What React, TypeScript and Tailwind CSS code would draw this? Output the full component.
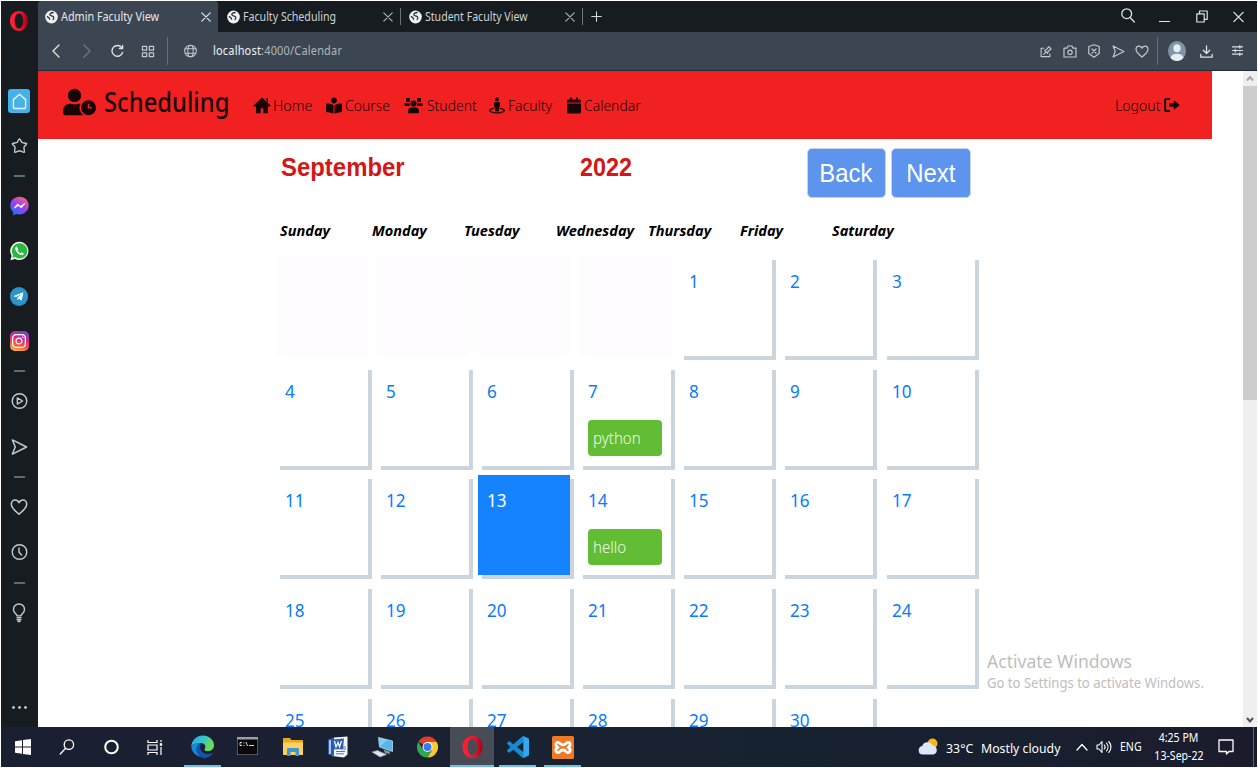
import React from "react";
import {
  FaUserClock,
  FaBookReader,
  FaStreetView,
  FaCalendar,
  FaFacebookMessenger,
  FaTelegramPlane,
  FaInstagram,
} from "react-icons/fa";

const line = {
  fill: "none",
  stroke: "currentColor",
  strokeLinecap: "round" as const,
  strokeLinejoin: "round" as const,
};

function Label({ w, className, children }: { w: string; className: string; children: React.ReactNode }) {
  return (
    <span className={`block shrink-0 ${w}`}>
      <span className={`block w-max origin-left whitespace-nowrap ${className}`}>{children}</span>
    </span>
  );
}

function OperaLogo({ className }: { className: string }) {
  return (
    <svg viewBox="0 0 20 22" className={className}>
      <defs>
        <linearGradient id="opera" x1="0" y1="0" x2="1" y2="0">
          <stop offset="0" stopColor="#ff2138" />
          <stop offset=".6" stopColor="#f0142b" />
          <stop offset="1" stopColor="#a3000f" />
        </linearGradient>
      </defs>
      <path
        fillRule="evenodd"
        fill="url(#opera)"
        d="M10 0C4.200 0 0 4.800 0 11s4.200 11 10 11 10-4.800 10-11S15.800 0 10 0zm0 2.600c3 0 4.700 3.900 4.700 8.400s-1.700 8.400-4.700 8.400-4.700-3.900-4.700-8.400S7 2.600 10 2.600z"
      />
    </svg>
  );
}

function SiteGlobe() {
  return (
    <svg viewBox="0 0 14 14" className="h-[14px] w-[13px] shrink-0">
      <ellipse cx="7" cy="7" rx="6.800" ry="6.900" fill="#f1f3f5" />
      <path
        d="M9.300 2.200C7 2 5 3.200 5.200 4.600c.2 1.300 2 .9 3.300 1.700 1.400.9 1.300 2.500-.3 3.600M2 6.300l2.200 1.500 1 2"
        fill="none"
        stroke="#2a333c"
        strokeWidth="1.400"
      />
    </svg>
  );
}

function Close({ className }: { className: string }) {
  return (
    <svg viewBox="0 0 10 10" className={className} {...line} strokeWidth="1.200">
      <path d="M.8.8 9.200 9.200M9.200.8.8 9.200" />
    </svg>
  );
}

function Heart({ className }: { className: string }) {
  return (
    <svg viewBox="0 0 18 18" className={className} {...line} strokeWidth="1.600">
      <path d="M9 16.200C5 13 1.300 9.800 1.300 6.200 1.300 3.800 3 2 5.100 2 6.800 2 8.200 3 9 4.700 9.800 3 11.200 2 12.900 2c2.100 0 3.800 1.800 3.800 4.200 0 3.600-3.700 6.800-7.700 10z" />
    </svg>
  );
}

function SendArrow({ className }: { className: string }) {
  return (
    <svg viewBox="0 0 18 18" className={className} {...line} strokeWidth="1.600">
      <path d="M1.500 1.500 16.500 9l-15 7.500L4.500 9z" />
    </svg>
  );
}

const Dash = ({ mt }: { mt: string }) => <div className={`h-[2px] w-[11px] shrink-0 bg-[#5f6a72] ${mt}`} />;

const Slot = ({ mt, children }: { mt: string; children: React.ReactNode }) => (
  <div className={`flex h-[18px] w-full shrink-0 items-center justify-center text-[#c5cacd] ${mt}`}>{children}</div>
);

function Sidebar() {
  return (
    <aside className="flex w-[37px] shrink-0 flex-col items-center bg-[#171c20] pr-px">
      <OperaLogo className="mt-[10px] h-[20px] w-[18px] shrink-0" />
      <div className="mt-[58px] flex h-[24px] w-[22px] shrink-0 items-center justify-center rounded-[3px] bg-[#45b1e8] text-[#e3f6ff]">
        <svg viewBox="0 0 16 18" className="h-[17px] w-[15px]" {...line} strokeWidth="1.500">
          <path d="M1.500 7 8 1.200 14.500 7v7.500c0 1.200-.8 2-2 2h-9c-1.200 0-2-.8-2-2z" />
        </svg>
      </div>
      <Slot mt="mt-[24px]">
        <svg viewBox="0 0 18 18" className="h-[18px] w-[17px]" {...line} strokeWidth="1.500">
          <path d="M9 1.300c.7 0 2 3.600 2.600 4 .6.500 4.900.5 5.100 1.200.2.700-2.800 3-3 3.800-.2.700.9 4.900.3 5.400-.6.400-4.200-1.700-5-1.700s-4.400 2.100-5 1.700c-.6-.5.500-4.700.3-5.400-.2-.8-3.200-3.100-3-3.800.2-.7 4.500-.7 5.100-1.200.6-.4 1.900-4 2.600-4z" />
        </svg>
      </Slot>
      <Dash mt="mt-[20px]" />
      <Slot mt="mt-[20px]">
        <svg viewBox="0 0 20 20" className="h-[20px] w-[19px] shrink-0">
          <defs>
            <linearGradient id="msg" x1=".2" y1="1" x2=".8" y2="0">
              <stop offset="0" stopColor="#0a7cff" />
              <stop offset=".5" stopColor="#9a3cf6" />
              <stop offset="1" stopColor="#ff6a6a" />
            </linearGradient>
          </defs>
          <path d="M10 .3C4.500.3.3 4.300.3 9.600c0 2.900 1.200 5.300 3.100 7V20l3-1.600c1.100.3 2.300.5 3.600.5 5.500 0 9.700-4 9.700-9.300S15.500.3 10 .3z" fill="url(#msg)" />
          <path d="M4.300 12.200 8 7.800l3 2.400 4.700-2.900L12 12l-3-2.400z" fill="#fff" stroke="#fff" strokeWidth=".8" />
        </svg>
      </Slot>
      <Slot mt="mt-[27px]">
        <svg viewBox="0 0 20 20" className="h-[20px] w-[19px] shrink-0">
          <path d="M10 .2A9.700 9.700 0 0 0 1.700 15L.4 19.700 5.200 18.500A9.700 9.700 0 1 0 10 .2z" fill="#f2f5f3" />
          <path d="M10 1.900A8 8 0 0 0 3.300 14.300l-.7 2.800 2.900-.7A8 8 0 1 0 10 1.900z" fill="#2bb742" />
          <path d="M7 5.300c-.8.200-1.500 1-1.400 2.200.2 2.800 3.600 6.400 6.600 6.800 1.200.1 2.200-.7 2.300-1.800l-2.400-1.300-1.100 1.200c-1.500-.7-2.500-1.700-3.100-3.100l.9-1.100z" fill="#fff" />
        </svg>
      </Slot>
      <Slot mt="mt-[27px]">
        <div className="flex h-[19px] w-[18px] shrink-0 items-center justify-center rounded-full bg-[#2b95c9]">
          <FaTelegramPlane className="mr-px size-[11px] text-white" />
        </div>
      </Slot>
      <Slot mt="mt-[27px]">
        <div className="flex h-[20px] w-[19px] shrink-0 items-center justify-center rounded-[5px] bg-[linear-gradient(20deg,#fdb845_5%,#f5553d_35%,#d6298c_60%,#5a4bd8_100%)]">
          <FaInstagram className="size-[16px] text-white" />
        </div>
      </Slot>
      <Dash mt="mt-[20px]" />
      <Slot mt="mt-[20px]">
        <svg viewBox="0 0 18 18" className="h-[18px] w-[17px]" {...line} strokeWidth="1.500">
          <circle cx="9" cy="9" r="7.700" />
          <path d="M6.700 5.700v6.600L12.300 9z" />
        </svg>
      </Slot>
      <Slot mt="mt-[28px]">
        <SendArrow className="h-[18px] w-[17px]" />
      </Slot>
      <Dash mt="mt-[20px]" />
      <Slot mt="mt-[20px]">
        <Heart className="h-[18px] w-[18px]" />
      </Slot>
      <Slot mt="mt-[27px]">
        <svg viewBox="0 0 18 18" className="h-[18px] w-[17px]" {...line} strokeWidth="1.500">
          <circle cx="9" cy="9" r="7.700" />
          <path d="M8.500 4.700V9.200l2.700 2.900" />
        </svg>
      </Slot>
      <Dash mt="mt-[21px]" />
      <Slot mt="mt-[20px]">
        <svg viewBox="0 0 14 21" className="h-[20px] w-[14px] shrink-0" {...line} strokeWidth="1.500">
          <path d="M5 13.500C4.600 11.500 1.200 10.500 1.200 6.800a5.800 5.800 0 0 1 11.600 0c0 3.700-3.400 4.700-3.800 6.700zM5 15.500h4M5 17.500h4M6 19.500h2" />
        </svg>
      </Slot>
      <Slot mt="mt-[76px]">
        <svg viewBox="0 0 15 3" className="h-[3px] w-[15px]" fill="currentColor">
          <circle cx="1.500" cy="1.500" r="1.400" />
          <circle cx="7.500" cy="1.500" r="1.400" />
          <circle cx="13.500" cy="1.500" r="1.400" />
        </svg>
      </Slot>
    </aside>
  );
}

function Tab({ title, active, divider, scale }: { title: string; active?: boolean; divider?: boolean; scale: string }) {
  return (
    <div
      className={`flex h-full shrink-0 items-center ${
        active ? "w-[180px] rounded-t-[3px] bg-[#3b4652] pl-[7px] text-[#e4e8eb]" : "w-[182px] pl-[9px] text-[#cdd2d6]"
      }`}
    >
      <SiteGlobe />
      <Label w="ml-[3px] w-[140px]" className={`text-[12px] leading-4 ${scale}`}>
        {title}
      </Label>
      <Close className={`size-[10px] shrink-0 ${active ? "text-[#e4e8eb]" : "text-[#aab1b6]"}`} />
      {divider && <span className="ml-[7px] h-[17px] w-px shrink-0 bg-[#6b747b]" />}
    </div>
  );
}

function TabBar() {
  return (
    <div className="flex h-[31px] shrink-0 items-center bg-[#171c20]">
      <Tab title="Admin Faculty View" active scale="scale-x-[.9]" />
      <Tab title="Faculty Scheduling" divider scale="scale-x-[.885]" />
      <Tab title="Student Faculty View" divider scale="scale-x-[.88]" />
      <svg viewBox="0 0 12 12" className="ml-[9px] size-[11px] text-[#d5dadd]" {...line} strokeWidth="1.200">
        <path d="M6 .8v10.400M.8 6h10.400" />
      </svg>
      <div className="ml-auto flex items-center pr-[13px] text-[#dfe3e5]">
        <svg viewBox="0 0 14 15" className="mb-[3px] h-[15px] w-[14px]" {...line} strokeWidth="1.300">
          <circle cx="5.700" cy="5.700" r="4.900" />
          <path d="M9.300 9.700l4 4.300" />
        </svg>
        <span className="ml-[24px] mt-[9px] h-px w-[11px] bg-[#dfe3e5]" />
        <svg viewBox="0 0 12 13" className="ml-[26px] h-[13px] w-[12px]" {...line} strokeWidth="1.200">
          <path d="M.8 3.800h7.400v8.200H.8zM3.500 3.500V1h7.700v8.300H8.500" />
        </svg>
        <Close className="ml-[25px] h-[12px] w-[11px]" />
      </div>
    </div>
  );
}

function AddressBar() {
  return (
    <div className="flex h-[39px] shrink-0 items-center border-b border-[#232c34] bg-[#3b4652] text-[#c3c9ce]">
      <svg viewBox="0 0 8 14" className="ml-[14px] h-[14px] w-[8px] text-[#dde1e4]" {...line} strokeWidth="1.400">
        <path d="M7 1 1 7l6 6" />
      </svg>
      <svg viewBox="0 0 8 14" className="ml-[23px] h-[14px] w-[8px] text-[#6d7780]" {...line} strokeWidth="1.400">
        <path d="M1 1l6 6-6 6" />
      </svg>
      <svg viewBox="0 0 14 14" className="ml-[20px] h-[14px] w-[13px] text-[#dde1e4]" {...line} strokeWidth="1.500">
        <path d="M12.500 8.500A5.800 5.800 0 1 1 11.500 3.300M12.500 1v3.300H9" />
      </svg>
      <svg viewBox="0 0 14 14" className="ml-[17px] h-[13px] w-[14px]" {...line} strokeWidth="1.300">
        <path d="M1 1.500h4.600v4H1zM8.400 1.500H13v4H8.400zM1 8.500h4.600v4H1zM8.400 8.500H13v4H8.400z" />
      </svg>
      <span className="ml-[12px] h-[28px] w-px bg-[#65707a]" />
      <svg viewBox="0 0 14 14" className="ml-[16px] h-[14px] w-[13px]" {...line} strokeWidth="1.100">
        <circle cx="7" cy="7" r="6.300" />
        <ellipse cx="7" cy="7" rx="2.900" ry="6.300" />
        <path d="M1.300 4.600h11.400M1.300 9.400h11.400" />
      </svg>
      <Label w="ml-[16px] w-[140px]" className="scale-x-[.915] text-[12px] leading-4 tracking-[.2px] text-[#aeb6bd]">
        <span className="text-[#f0f2f4]">localhost</span>:4000/Calendar
      </Label>
      <div className="ml-auto flex items-center pr-[14px]">
        <svg viewBox="0 0 13 13" className="h-[13px] w-[12px]" {...line} strokeWidth="1.200">
          <path d="M4 3H1.200v9h9.500V9M4 9.500l2.300-2.300M5 5.200l3.200 3.300.5-2L12 3.800 9.500 1.200 7 4.500z" />
        </svg>
        <svg viewBox="0 0 14 13" className="ml-[11px] h-[13px] w-[14px]" {...line} strokeWidth="1.200">
          <path d="M1 3.200h3L5 1h4l1 2.200h3V12H1z" />
          <circle cx="7" cy="7.300" r="2.200" />
        </svg>
        <svg viewBox="0 0 12 14" className="ml-[11px] h-[14px] w-[12px]" {...line} strokeWidth="1.200">
          <path d="M6 .8 11.200 2.500v7L6 13.200.8 9.500v-7zM4 5l4 4M8 5 4 9" />
        </svg>
        <SendArrow className="ml-[12px] h-[13px] w-[13px]" />
        <Heart className="ml-[10px] h-[15px] w-[14px]" />
        <span className="ml-[8px] h-[28px] w-px bg-[#65707a]" />
        <svg viewBox="0 0 18 20" className="ml-[10px] h-[20px] w-[18px]">
          <ellipse cx="9" cy="10" rx="9" ry="10" fill="#8295a5" />
          <ellipse cx="9" cy="7.300" rx="3.600" ry="4" fill="#e7eef3" />
          <path d="M2.500 16.700c1-3.100 3.600-4 6.500-4s5.500.9 6.500 4C13.800 18.900 11.500 20 9 20s-4.800-1.100-6.500-3.300z" fill="#e7eef3" />
        </svg>
        <svg viewBox="0 0 13 13" className="ml-[14px] h-[13px] w-[13px] text-[#dde1e4]" {...line} strokeWidth="1.300">
          <path d="M6.500.8v7.500M3.300 5.300l3.200 3.200 3.200-3.200M.8 9.500v2.700h11.400V9.500" />
        </svg>
        <svg viewBox="0 0 12 12" className="ml-[19px] mb-px h-[11px] w-[11px] text-[#dde1e4]" {...line} strokeWidth="1.200">
          <path d="M.5 2h11M.5 6h11M.5 10h11M8.500.5v3M3.500 4.500v3M8.500 8.500v3" />
        </svg>
      </div>
    </div>
  );
}

const navText = "text-[15px] leading-5 font-light";

function Navbar() {
  return (
    <nav className="flex h-[68px] w-[1174px] shrink-0 items-center bg-[#f22121] pl-[25px] text-[#1a0505]">
      <FaUserClock className="mb-[7px] h-[28px] w-[33px] shrink-0" />
      <Label w="ml-[8px] mb-[6px] w-[149px]" className="scale-x-[.88] text-[27px] font-medium leading-8">
        Scheduling
      </Label>
      <svg viewBox="0 0 18 17" className="h-[17px] w-[18px] shrink-0" fill="currentColor">
        <path d="M9 .5 17.800 8.800 16.500 9.500H15V16.200h-4.700v-5H7.700v5H3V9.500H.8L.2 8.800z" />
        <path d="M12.500 1.300H15V6z" />
      </svg>
      <Label w="ml-[2px] w-[53px]" className={`${navText} scale-x-[.95]`}>Home</Label>
      <FaBookReader className="h-[17px] w-[16px] shrink-0" />
      <Label w="ml-[3px] w-[59px]" className={`${navText} scale-x-[.93]`}>Course</Label>
      <svg viewBox="0 0 19 17" className="h-[17px] w-[19px] shrink-0" fill="currentColor">
        <path d="M2 1h3.800v4H2zM13.200 1H17v4h-3.800zM.5 6.200h4.800L6 9H.5zM13.700 6.200h4.800V9H13z" />
        <circle cx="9.500" cy="6.500" r="3.100" />
        <path d="M4 16.300v-2.500c0-2 1.300-3.300 3.300-3.300h4.400c2 0 3.300 1.300 3.300 3.300v2.500z" />
      </svg>
      <Label w="ml-[4px] w-[62px]" className={`${navText} scale-x-[.93]`}>Student</Label>
      <FaStreetView className="h-[17px] w-[16px] shrink-0" />
      <Label w="ml-[3px] w-[59px]" className={`${navText} scale-x-[.93]`}>Faculty</Label>
      <FaCalendar className="h-[17px] w-[14px] shrink-0" />
      <Label w="ml-[3px] w-[60px]" className={`${navText} scale-x-[.93]`}>Calendar</Label>
      <div className="ml-auto flex items-center pr-[32px]">
        <Label w="w-[49px]" className={`${navText} scale-x-[.94]`}>Logout</Label>
        <svg viewBox="0 0 16 14" className="mb-px h-[14px] w-[16px] shrink-0">
          <path d="M6 1H2.200C1.500 1 1.100 1.400 1.100 2v10c0 .6.400 1 1.100 1H6" fill="none" stroke="currentColor" strokeWidth="2" />
          <path d="M5.500 5.200H9.800V2.200L15.800 7l-6 4.800v-3H5.500z" fill="currentColor" />
        </svg>
      </div>
    </nav>
  );
}

const weekdays = ["Sunday", "Monday", "Tuesday", "Wednesday", "Thursday", "Friday", "Saturday"];
const events: Record<number, string> = { 7: "python", 14: "hello" };
const today = 13;
const cells: number[] = Array.from({ length: 34 }, (_, i) => i - 3);

function DayCell({ day }: { day: number }) {
  if (day < 1) return <div className="h-[100px] w-[92px] bg-[#fefcff]" />;
  const isToday = day === today;
  return (
    <div
      className={`h-[100px] w-[92px] pl-[9px] pt-[14px] shadow-[4px_4px_0_#cad5de] ${
        isToday ? "bg-[#1583ff] text-white" : "bg-white text-[#087cfa]"
      }`}
    >
      <div className="origin-left scale-x-[.95] text-[18px] leading-[22px]">{day}</div>
      {events[day] && (
        <div className="mt-[18px] flex h-[36px] w-[74px] items-center rounded-[4px] bg-[#62bd34] pl-[5px] text-[#eefbe6]">
          <span className="origin-left scale-x-[.94] text-[16px] leading-5 font-light">{events[day]}</span>
        </div>
      )}
    </div>
  );
}

function Calendar() {
  return (
    <section className="ml-[237.500px] flex min-h-0 w-[705px] flex-1 flex-col">
      <div className="flex h-[77px] shrink-0 items-start pl-[5px] pt-[9px]">
        <Label w="w-[299px]" className="mt-[3px] scale-x-[.92] font-['Liberation_Sans',sans-serif] text-[26px] font-bold leading-8 text-[#d31717]">
          September
        </Label>
        <Label w="w-[227px]" className="mt-[3px] scale-x-[.9] font-['Liberation_Sans',sans-serif] text-[26px] font-bold leading-8 text-[#d31717]">
          2022
        </Label>
        {["Back", "Next"].map((name) => (
          <button
            key={name}
            className="mr-[5px] flex h-[50px] w-[79.500px] shrink-0 items-center justify-center rounded-[5px] border border-[#c9d4e6] bg-[#5c94ee] font-['Liberation_Sans',sans-serif] text-[26px] text-white"
          >
            <span className="scale-x-[.92]">{name}</span>
          </button>
        ))}
      </div>
      <div className="flex h-[40px] shrink-0 pl-[4.500px] pt-[4px]">
        {weekdays.map((d) => (
          <Label key={d} w="w-[92px]" className="scale-x-[.97] text-[15px] font-bold italic leading-5 text-black">
            {d}
          </Label>
        ))}
      </div>
      <div className="grid shrink-0 grid-cols-[repeat(7,92px)] gap-x-[9.200px] gap-y-[9.700px]">
        {cells.map((d) => (
          <DayCell key={d} day={d} />
        ))}
      </div>
    </section>
  );
}

function Scrollbar() {
  return (
    <div className="flex w-[14px] shrink-0 flex-col bg-[#efefef]">
      <svg viewBox="0 0 14 15" className="h-[15px] w-[14px]" fill="none" stroke="#a5a5a5" strokeWidth="2">
        <path d="M4 9.500l3-3.500 3 3.500" />
      </svg>
      <div className="h-[314px] bg-[#cdcdcd]" />
      <svg viewBox="0 0 14 15" className="mt-auto h-[15px] w-[14px]" fill="none" stroke="#505050" strokeWidth="2">
        <path d="M4 6l3 3.500L10 6" />
      </svg>
    </div>
  );
}

function TaskItem({ w, state, children }: { w: string; state?: "open" | "active"; children: React.ReactNode }) {
  return (
    <div className={`relative flex h-full shrink-0 items-center justify-center ${w} ${state === "active" ? "bg-[#484c57]" : ""}`}>
      {children}
      {state && <span className={`absolute bottom-0 h-[2px] bg-[#76b9ed] ${state === "active" ? "inset-x-0" : "inset-x-[4px]"}`} />}
    </div>
  );
}

function Taskbar() {
  return (
    <footer className="flex h-[40px] shrink-0 items-center bg-[linear-gradient(90deg,#1a1f31,#1a2231_40%,#172231_65%,#1a1c2d)] text-white">
      <TaskItem w="w-[44px]">
        <svg viewBox="0 0 16 16" className="h-[16px] w-[16px]" fill="#fff">
          <path d="M0 2.200 7 1.200v6.300H0zM8 1.100 16 0v7.500H8zM0 8.500h7v6.300l-7-1zM8 8.500h8V16l-8-1.100z" />
        </svg>
      </TaskItem>
      <TaskItem w="w-[44px]">
        <svg viewBox="0 0 16 17" className="h-[16px] w-[16px]" {...line} strokeWidth="1.400">
          <circle cx="10" cy="6" r="5" />
          <path d="M6.500 9.800.8 16" />
        </svg>
      </TaskItem>
      <TaskItem w="w-[44px]">
        <svg viewBox="0 0 16 16" className="h-[16px] w-[15px]" fill="none" stroke="#fff" strokeWidth="2.200">
          <circle cx="8" cy="8" r="6.700" />
        </svg>
      </TaskItem>
      <TaskItem w="w-[44px]">
        <svg viewBox="0 0 16 15" className="h-[15px] w-[16px]" fill="none" stroke="#fff" strokeWidth="1.200">
          <path d="M1 0v2.500h9V0M1 5h9v5H1zM1 15v-2.500h9V15M14 0v2M14 7v8" />
          <path d="M14 3.200v2.600" strokeWidth="2.400" />
        </svg>
      </TaskItem>
      <TaskItem w="ml-[3px] w-[45px]" state="open">
        <svg viewBox="0 0 24 24" className="h-[24px] w-[23px]">
          <defs>
            <linearGradient id="edgeTop" x1="0" y1="0" x2="1" y2=".4">
              <stop offset="0" stopColor="#2aa9e8" />
              <stop offset=".5" stopColor="#2fc3d2" />
              <stop offset="1" stopColor="#6ddc55" />
            </linearGradient>
          </defs>
          <path d="M.3 11C1 4.500 6 0 12.200 0 19 0 24 4.800 24 10.200c0 3.800-3 6.200-6.300 6.200-2.600 0-4-1-3.700-1.800 1.800-2.200 1.300-6.300-3.500-6.700C5.500 7.500 2.300 9 .3 11z" fill="url(#edgeTop)" />
          <path d="M.2 11.500C2 8.500 6 7.400 9.800 8c-3.500 2-4.300 5.500-2.800 8.700 2 4.300 6.700 5.500 11 4.300A12 12 0 0 1 .2 11.500z" fill="#1688d8" />
          <path d="M9.800 8.100c-3.700 1.300-5.300 5.500-3.800 9.400 1.800 4.600 6 6.800 9.700 6 3-.8 5.500-2.600 6.700-4.700.3-.5-.2-.8-.7-.5C17.500 20.300 12 19 10.300 15c-1-2.700-.2-5.300-.5-6.900z" fill="#1454a8" />
        </svg>
      </TaskItem>
      <TaskItem w="w-[45px]">
        <svg viewBox="0 0 21 18" className="mb-[2px] h-[18px] w-[21px]">
          <path d="M0 0h21v18H0z" fill="#9b9fa3" />
          <path d="M.5 2.500h20v15H.5z" fill="#080808" />
          <path d="M3 5.500h2M3 5.500v3h2M7 5.500v1M7 8v1M9 5l1.500 4M12 8.500h5" stroke="#d5d5d5" fill="none" />
        </svg>
      </TaskItem>
      <TaskItem w="w-[45px]">
        <svg viewBox="0 0 20 18" className="h-[18px] w-[20px]">
          <path d="M0 1c0-.6.400-1 1-1h6l1.500 2H19c.6 0 1 .4 1 1v14H0z" fill="#e9a820" />
          <path d="M0 4.500h20V17H0z" fill="#fcd25c" />
          <path d="M4 18v-6.500C4 10.600 4.600 10 5.500 10h9c.9 0 1.500.6 1.500 1.500V18h-3.500v-4h-5v4z" fill="#3d97db" />
        </svg>
      </TaskItem>
      <TaskItem w="w-[45px]">
        <svg viewBox="0 0 22 22" className="h-[22px] w-[22px]">
          <path d="M7 1.500 20.500.5v18L17 21.500 5 20z" fill="#f4f7fb" />
          <path d="M1 3.500 7 1.500V20L1 18.500z" fill="#2a59ad" />
          <path d="M14 11h5M14 13h5M9 15.500h9M9 17.800h8" stroke="#4a78c4" />
          <path d="M5.500 3.500 17 2.500l-1 10.500-10 .5z" fill="#2c5fb5" />
          <path d="M7.500 5 9 11l2-4.500 1.500 4.300L14.500 5" stroke="#fff" strokeWidth="1.200" fill="none" />
          <path d="M3 4v14" stroke="#dce7f7" strokeWidth="1.500" />
        </svg>
      </TaskItem>
      <TaskItem w="w-[45px]">
        <svg viewBox="0 0 21 22" className="h-[22px] w-[21px]">
          <path d="M6.500 1.500 20.500 5v10.500L7.500 11z" fill="#55b8ec" stroke="#b9dcee" strokeWidth=".8" />
          <path d="M7 2l8 2L8 10.500z" fill="#80cdf5" />
          <path d="M11.500 13.500l6 2 .5 2.500-5-1z" fill="#8d989f" />
          <path d="M0 16 5.500 14.500 14.500 18.500 8 21z" fill="#dfe4e7" stroke="#98a2a9" strokeWidth=".6" />
        </svg>
      </TaskItem>
      <TaskItem w="w-[45px]">
        <svg viewBox="0 0 22 22" className="h-[22px] w-[21px]">
          <path d="M11 11 1.470 5.500A11 11 0 0 1 20.530 5.500H11z" fill="#e33b2e" />
          <path d="M11 11 11 5.500h9.530A11 11 0 0 1 11 22l4.760-8.250z" fill="#fcc934" />
          <path d="M11 22A11 11 0 0 1 1.470 5.500L6.240 13.750 11 16.500l4.760-2.750z" fill="#2da94f" />
          <circle cx="11" cy="11" r="5.300" fill="#fff" />
          <circle cx="11" cy="11" r="4.200" fill="#397be8" />
        </svg>
      </TaskItem>
      <TaskItem w="w-[44px]" state="active">
        <OperaLogo className="h-[22px] w-[21px]" />
      </TaskItem>
      <TaskItem w="ml-[1px] w-[45px]" state="open">
        <svg viewBox="0 0 24 24" className="h-[24px] w-[22px]">
          <path
            d="M23.150 2.587L18.210.21a1.494 1.494 0 0 0-1.705.29l-9.460 8.630-4.120-3.128a.999.999 0 0 0-1.276.057L.327 7.261A1 1 0 0 0 .326 8.740L3.899 12 .326 15.260a1 1 0 0 0 .001 1.479L1.650 17.940a.999.999 0 0 0 1.276.057l4.120-3.128 9.460 8.630a1.492 1.492 0 0 0 1.704.290l4.942-2.377A1.500 1.500 0 0 0 24 20.060V3.939a1.500 1.500 0 0 0-.850-1.352zm-5.146 14.861L10.826 12l7.178-5.448v10.896z"
            fill="#168bd2"
          />
          <path d="M18 .2l5.200 2.400c.5.300.8.700.8 1.300v16.200c0 .6-.3 1-.8 1.300L18 23.800z" fill="#35a9f0" />
        </svg>
      </TaskItem>
      <TaskItem w="w-[45px]" state="open">
        <svg viewBox="0 0 22 23" className="h-[23px] w-[22px]">
          <rect width="22" height="23" rx="1.500" fill="#ee7a25" />
          <path
            d="M7.500 7c-2.500-1.500-4 0-3.500 2 .3 1.500 1.500 2.500 2 2.500-1.500.6-2.500 2-2 3.500.6 2 3 2 4 .5.600-1 1.600-1.500 3-1.500s2.400.5 3 1.500c1 1.500 3.400 1.500 4-.5.500-1.500-.5-2.900-2-3.500.5 0 1.700-1 2-2.500.5-2-1-3.500-3.500-2-1 .8-2 1.800-3.500 1.800S8.500 7.800 7.500 7z"
            fill="none"
            stroke="#fff"
            strokeWidth="2.800"
            strokeLinejoin="round"
          />
        </svg>
      </TaskItem>
      <div className="ml-auto flex h-full items-center">
        <svg viewBox="0 0 20 17" className="mb-[2px] h-[17px] w-[20px]">
          <circle cx="14.500" cy="5.500" r="5" fill="#fdb31c" />
          <path d="M4.500 16.500a4.300 4.300 0 0 1-.3-8.500A5.500 5.500 0 0 1 14.500 7.500 4.600 4.600 0 0 1 15.500 16.500z" fill="#dce8fa" />
        </svg>
        <Label w="ml-[8px] mt-px w-[35px]" className="scale-x-[.95] text-[13px] leading-5">33°C</Label>
        <Label w="mt-px w-[95px]" className="scale-x-[.945] text-[13px] leading-5">Mostly cloudy</Label>
        <svg viewBox="0 0 12 8" className="h-[8px] w-[12px]" {...line} strokeWidth="1.300">
          <path d="M1 7l5-5.500L11 7" />
        </svg>
        <svg viewBox="0 0 16 14" className="ml-[8px] h-[14px] w-[16px]" {...line} strokeWidth="1.100">
          <path d="M1 5h2l3-3.500v11L3 9H1zM8.300 5c1 1.200 1 2.800 0 4M10.500 3.200c2 2.200 2 5.400 0 7.600M12.700 1.500c3 3.200 3 7.800 0 11" />
        </svg>
        <Label w="ml-[8px] w-[34px]" className="scale-x-[.88] text-[12px] leading-5">ENG</Label>
        <div className="flex w-[49px] flex-col items-center text-[12px] leading-[18px]">
          <span className="scale-x-[.88] whitespace-nowrap">4:25 PM</span>
          <span className="scale-x-[.88] whitespace-nowrap">13-Sep-22</span>
        </div>
        <svg viewBox="0 0 16 16" className="ml-[15px] h-[16px] w-[16px]" {...line} strokeWidth="1.300">
          <path d="M1 1h14v11.500h-4L8.500 15V12.500H1z" />
        </svg>
        <span className="ml-[19px] mr-[3px] h-full w-px bg-[#5d616c]" />
      </div>
    </footer>
  );
}

export default function App() {
  return (
    <div className="flex h-[768px] w-[1258px] flex-col overflow-hidden bg-white p-px font-['Noto_Sans','Open_Sans',sans-serif]">
      <div className="flex min-h-0 flex-1">
        <Sidebar />
        <div className="flex min-w-0 flex-1 flex-col">
          <TabBar />
          <AddressBar />
          <div className="flex min-h-0 flex-1 overflow-hidden">
            <main className="relative flex min-w-0 flex-1 flex-col overflow-hidden">
              <Navbar />
              <Calendar />
              <div className="absolute left-[949px] top-[579px] text-[#bebebe]">
                <Label w="w-[150px]" className="scale-x-[.975] text-[18px] leading-[22px]">Activate Windows</Label>
                <Label w="w-[230px]" className="scale-x-[.97] text-[13.500px] leading-[22px]">Go to Settings to activate Windows.</Label>
              </div>
            </main>
            <Scrollbar />
          </div>
        </div>
      </div>
      <Taskbar />
    </div>
  );
}
